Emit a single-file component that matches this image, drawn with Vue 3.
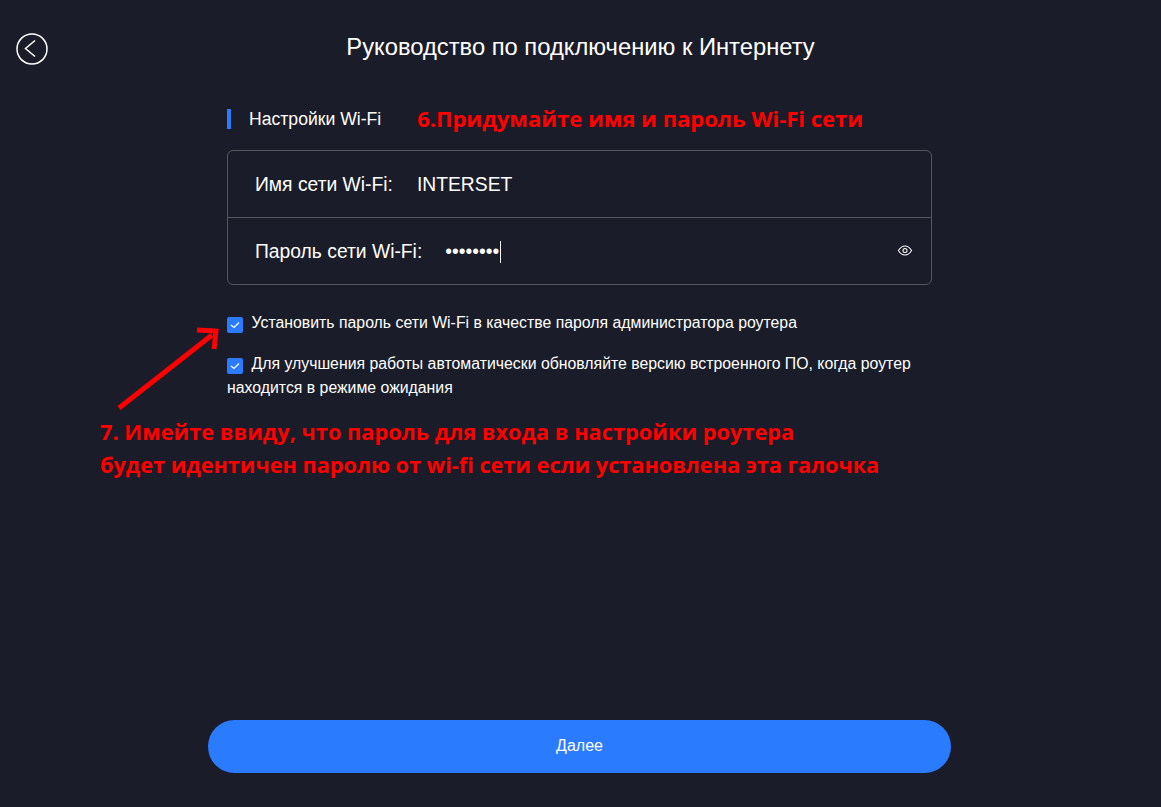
<template>
  <div class="page">
    <header class="top">
      <button class="back" type="button" aria-label="Назад">
        <svg width="32" height="32" viewBox="0 0 32 32" fill="none" stroke="#fff">
          <circle cx="16" cy="16" r="15" stroke-width="1.5" />
          <path d="M19 7.5 L9.5 15.5 L19 23.5" stroke-width="1.5" />
        </svg>
      </button>
      <h1>Руководство по подключению к Интернету</h1>
    </header>

    <main class="content">
      <div class="section">
        <span class="section-title">Настройки Wi-Fi</span>
        <span class="note note-six">6.Придумайте имя и пароль Wi-Fi сети</span>
      </div>

      <div class="fields">
        <div class="field">
          <label>Имя сети Wi-Fi:</label>
          <span class="value">INTERSET</span>
        </div>
        <div class="field">
          <label>Пароль сети Wi-Fi:</label>
          <span class="dots">{{ '•'.repeat(8) }}</span>
          <span class="caret"></span>
          <svg class="eye" width="16" height="11" viewBox="0 0 16 12" fill="none" stroke="#fff" stroke-width="1.1">
            <path d="M0.8 6 C3 2.4 5.4 1 8 1 C10.6 1 13 2.4 15.2 6 C13 9.6 10.6 11 8 11 C5.4 11 3 9.6 0.8 6 Z" />
            <circle cx="8" cy="6" r="2.2" />
          </svg>
        </div>
      </div>

      <div class="checks">
        <div v-for="item in checks" :key="item" class="check">
          <span class="box">
            <svg width="10" height="8" viewBox="0 0 10 8" fill="none" stroke="#fff" stroke-width="1.2">
              <path d="M1 4 L4 6.5 L9 1.5" />
            </svg>
          </span>{{ item }}
        </div>
      </div>
    </main>

    <svg class="arrow" width="110" height="90" viewBox="0 0 110 90">
      <path d="M3 86 L96 13" stroke="#ff0000" stroke-width="5" fill="none" />
      <path d="M81 8 L100 9 L98 27" stroke="#ff0000" stroke-width="5" fill="none" />
    </svg>
    <p class="note note-seven">
      <span class="first-line">7. Имейте ввиду, что пароль для входа в настройки роутера</span><br />
      будет идентичен паролю от wi-fi сети если установлена эта галочка
    </p>

    <button class="next" type="button">Далее</button>
  </div>
</template>

<script setup>
const checks = [
  'Установить пароль сети Wi-Fi в качестве пароля администратора роутера',
  'Для улучшения работы автоматически обновляйте версию встроенного ПО, когда роутер находится в режиме ожидания',
]
</script>

<style>
html,
body {
  margin: 0;
  background: #1a1d29;
}
</style>

<style scoped>
.page {
  position: relative;
  height: 807px;
  display: flex;
  flex-direction: column;
  background: #1a1d29;
  color: #fff;
  font-family: "Liberation Sans", Arial, sans-serif;
  overflow: hidden;
}
.top {
  display: flex;
  align-items: center;
  justify-content: center;
  position: relative;
  height: 32px;
  margin-top: 32px;
}
.top h1 {
  margin: 0 0 2px;
  font-size: 23.75px;
  font-weight: 400;
}
.back {
  position: absolute;
  left: 16px;
  top: 1px;
  padding: 0;
  border: 0;
  background: none;
  line-height: 0;
}
.content {
  width: 705px;
  margin: 0 0 0 227px;
}
.section {
  display: flex;
  align-items: center;
  height: 30px;
  margin-top: 40px;
  gap: 36px;
}
.section-title {
  height: 20px;
  line-height: 20px;
  padding-left: 18px;
  border-left: 4px solid #2b7bff;
  font-size: 17.6px;
}
.note {
  margin: 0;
  color: #ff0000;
  font-family: "Open Sans", sans-serif;
  font-weight: 700;
}
.note-six {
  margin-bottom: 2px;
  font-size: 22px;
}
.fields {
  margin-top: 16px;
  border: 1px solid #55575f;
  border-radius: 6px;
}
.field {
  display: flex;
  align-items: center;
  box-sizing: border-box;
  height: 66px;
  padding: 2px 18px 0 27px;
  font-size: 19.3px;
}
.field + .field {
  border-top: 1px solid #55575f;
  height: 67px;
}
.value {
  margin-left: 24px;
}
.dots {
  margin-left: 23px;
}
.caret {
  width: 1px;
  height: 22px;
  margin-left: 1px;
  background: #fff;
}
.eye {
  margin-left: auto;
  margin-bottom: 4px;
}
.checks {
  margin-top: 26px;
  font-size: 15.84px;
  line-height: 24px;
}
.check {
  margin-bottom: 17px;
}
.box {
  display: inline-flex;
  align-items: center;
  justify-content: center;
  width: 16px;
  height: 16px;
  margin-right: 8.5px;
  border-radius: 2px;
  background: #2b7bff;
  vertical-align: -1px;
}
.arrow {
  position: absolute;
  left: 116px;
  top: 322px;
}
.note-seven {
  position: absolute;
  left: 100px;
  top: 415px;
  font-size: 21.7px;
  line-height: 33px;
  white-space: nowrap;
}
.first-line {
  letter-spacing: 0.05px;
}
.next {
  position: absolute;
  left: 208px;
  top: 720px;
  width: 743px;
  height: 53px;
  padding-bottom: 3px;
  border: 0;
  border-radius: 27px;
  background: #2b7bff;
  color: #fff;
  font-family: inherit;
  font-size: 16px;
}
</style>
